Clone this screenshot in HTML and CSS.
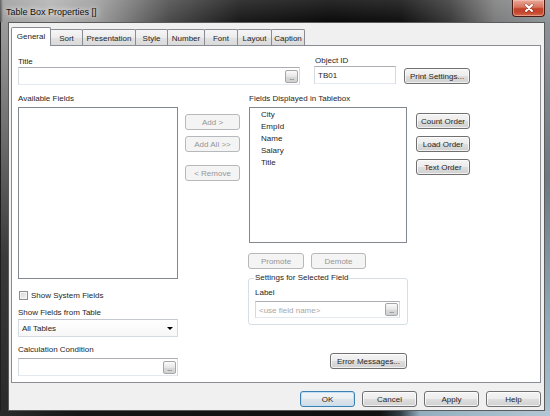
FILE: index.html
```html
<!DOCTYPE html>
<html>
<head>
<meta charset="utf-8">
<title>Table Box Properties</title>
<link rel="stylesheet" href="styles.css">
</head>
<body>
<div class="window">
  <div class="titlebar">
    <span class="title">Table Box Properties []</span>
    <div class="close">
      <svg width="12" height="10" viewBox="0 0 12 10"><path d="M3 2 L9 8 M9 2 L3 8" stroke="#5a1208" stroke-width="3" stroke-linecap="round" opacity="0.5"/><path d="M3 2 L9 8 M9 2 L3 8" stroke="#ffffff" stroke-width="2" stroke-linecap="round"/></svg>
    </div>
  </div>
  <div class="mid">
    <div class="frame-l"></div>
    <div class="client">
      <div class="tabs">
        <div class="tab active t-general">General</div>
        <div class="tab t-sort">Sort</div>
        <div class="tab t-pres">Presentation</div>
        <div class="tab t-style">Style</div>
        <div class="tab t-number">Number</div>
        <div class="tab t-font">Font</div>
        <div class="tab t-layout">Layout</div>
        <div class="tab t-caption">Caption</div>
      </div>
      <div class="panel">
        <div class="toprow">
          <div class="fld title-fld">
            <div class="lbl">Title</div>
            <div class="input"><span></span><span class="ell">...</span></div>
          </div>
          <div class="fld objid-fld">
            <div class="lbl">Object ID</div>
            <div class="input"><span class="val">TB01</span></div>
          </div>
          <button class="btn print">Print Settings...</button>
        </div>
        <div class="cols">
          <div class="col col-left">
            <div class="lbl">Available Fields</div>
            <div class="listbox avail"></div>
            <div class="chk"><span class="box"></span><span>Show System Fields</span></div>
            <div class="lbl lbl-gap">Show Fields from Table</div>
            <div class="combo"><span class="val">All Tables</span><span class="arrow"></span></div>
            <div class="lbl lbl-gap">Calculation Condition</div>
            <div class="input calc"><span></span><span class="ell">...</span></div>
          </div>
          <div class="col col-mid">
            <button class="btn disabled add">Add &gt;</button>
            <button class="btn disabled addall">Add All &gt;&gt;</button>
            <button class="btn disabled remove">&lt; Remove</button>
          </div>
          <div class="col col-right">
            <div class="lbl">Fields Displayed in Tablebox</div>
            <div class="listbox shown">
              <div class="item">City</div>
              <div class="item">EmpId</div>
              <div class="item">Name</div>
              <div class="item">Salary</div>
              <div class="item">Title</div>
            </div>
            <div class="pd-row">
              <button class="btn disabled promote">Promote</button>
              <button class="btn disabled demote">Demote</button>
            </div>
            <fieldset class="group">
              <legend>Settings for Selected Field</legend>
              <div class="lbl">Label</div>
              <div class="input lbl-input"><span class="ph">&lt;use field name&gt;</span><span class="ell">...</span></div>
            </fieldset>
            <button class="btn errmsg">Error Messages...</button>
          </div>
          <div class="col col-far">
            <button class="btn count">Count Order</button>
            <button class="btn load">Load Order</button>
            <button class="btn text">Text Order</button>
          </div>
        </div>
      </div>
      <div class="bottom">
        <button class="btn default">OK</button>
        <button class="btn">Cancel</button>
        <button class="btn">Apply</button>
        <button class="btn">Help</button>
      </div>
    </div>
    <div class="frame-r"></div>
  </div>
  <div class="frame-b"></div>
</div>
</body>
</html>
```
FILE: styles.css
```css
* { box-sizing: border-box; }
html, body { margin: 0; padding: 0; }
body {
  width: 550px;
  height: 416px;
  overflow: hidden;
  font-family: "Liberation Sans", Arial, sans-serif;
  font-size: 8px;
  color: #262626;
  background: #111;
}
.window {
  width: 550px;
  height: 416px;
  display: flex;
  flex-direction: column;
  background:
    linear-gradient(to bottom, rgba(255,255,255,0.12), rgba(255,255,255,0) 22px),
    linear-gradient(to right, #4a4a4a 0px, #9d9d9d 3px, #b3b3b3 50px, #9a9a9a 100px, #4a4a4a 170px, #1a1a1a 240px, #0b0b0b 330px, #111 400px, #3a3a3a 450px, #7d7d7d 495px, #8f969b 550px);
}
.titlebar {
  height: 22px;
  flex: none;
  display: flex;
  align-items: flex-start;
  padding: 0 5px 0 6px;
}
.title {
  font-size: 9px;
  line-height: 24px;
  color: #111;
  text-shadow: 0 0 5px rgba(255,255,255,0.95), 0 0 9px rgba(255,255,255,0.8);
}
.close {
  margin-left: auto;
  width: 33px;
  height: 17px;
  border: 1px solid #4b1a12;
  border-top: none;
  border-radius: 0 0 4px 4px;
  background: linear-gradient(to bottom, #e9a99a 0%, #d7735d 45%, #c1412a 55%, #c5492f 80%, #d86d4f 100%);
  box-shadow: inset 0 0 0 1px rgba(255,210,200,0.45);
  display: flex;
  align-items: center;
  justify-content: center;
}
.mid {
  flex: none;
  height: 389px;
  display: flex;
}
.frame-l {
  width: 8px;
  flex: none;
  border-left: 1px solid #1e1e1e;
  background: linear-gradient(to bottom, #9c9c9c 0%, #6c6c6c 30%, #3a3a3a 60%, #2a2a2a 100%);
}
.frame-r {
  width: 5px;
  flex: none;
  background: linear-gradient(to bottom, #8d9297 0%, #6d7880 40%, #8ea6b6 75%, #a9c0cf 100%);
}
.frame-b {
  flex: 1;
  background: linear-gradient(to right, #2b2b2b 0px, #151515 80px, #101010 380px, #2f3b43 400px, #94aebf 420px, #b2c7d5 550px);
}
.client {
  width: 537px;
  flex: none;
  background: #f0f0f0;
  border: 1px solid #5b5b5b;
  padding: 4px 0 0 1px;
  display: flex;
  flex-direction: column;
}
.tabs {
  display: flex;
  align-items: flex-end;
  height: 18px;
  margin-left: 1px;
}
.tab {
  height: 16px;
  border: 1px solid #898c95;
  border-bottom: none;
  border-radius: 2px 2px 0 0;
  margin-left: -1px;
  background: linear-gradient(to bottom, #f6f6f6 0%, #ececec 50%, #e2e2e2 51%, #dadada 100%);
  display: flex;
  align-items: center;
  justify-content: center;
  padding-top: 1px;
}
.tab.active {
  height: 19px;
  margin-left: 0;
  margin-bottom: -1px;
  background: #fff;
  position: relative;
  z-index: 1;
  padding-bottom: 2px;
}
.t-general { width: 40px; }
.t-sort { width: 33px; }
.t-pres { width: 54px; }
.t-style { width: 33px; }
.t-number { width: 38px; }
.t-font { width: 34px; }
.t-layout { width: 35px; }
.t-caption { width: 34px; }
.panel {
  margin-left: 1px;
  width: 530px;
  height: 338px;
  flex: none;
  border: 1px solid #898c95;
  background: #fff;
  padding: 11px 0 0 6px;
}
.lbl {
  height: 10px;
  line-height: 10px;
  white-space: nowrap;
}
.toprow {
  display: flex;
  align-items: flex-start;
}
.title-fld { width: 282px; }
.objid-fld { width: 82px; margin-left: 14px; }
.objid-fld .lbl { height: 9px; line-height: 8px; padding-left: 1px; }
.input {
  height: 18px;
  border: 1px solid;
  border-color: #abadb3 #d5d9e0 #e3e9ef #d5d9e0;
  background: #fff;
  display: flex;
  align-items: center;
  justify-content: space-between;
  padding: 0 1px 0 3px;
}
.input .val { padding-top: 1px; }
.ell {
  width: 13px;
  height: 13px;
  border: 1px solid #a6a6a6;
  border-radius: 2px;
  background: linear-gradient(to bottom, #fbfbfb, #e6e6e6 50%, #d9d9d9 51%, #d2d2d2);
  font-size: 7px;
  line-height: 14px;
  text-align: center;
  color: #444;
  letter-spacing: -0.5px;
}
.btn {
  height: 16px;
  padding: 0;
  margin: 0;
  font-family: "Liberation Sans", Arial, sans-serif;
  font-size: 8px;
  color: #262626;
  border: 1px solid #707070;
  border-radius: 3px;
  background: linear-gradient(to bottom, #f4f4f4 0%, #ececec 50%, #dedede 51%, #d0d0d0 100%);
  box-shadow: inset 0 0 0 1px rgba(255,255,255,0.7);
  display: flex;
  align-items: center;
  justify-content: center;
  white-space: nowrap;
}
.btn.disabled {
  border-color: #b5b9bc;
  background: #f4f4f4;
  color: #959595;
  box-shadow: none;
}
.btn.default {
  border-color: #3c7fb1;
  background: linear-gradient(to bottom, #f2f5f7 0%, #e9eef2 50%, #dde5eb 51%, #d3dde5 100%);
  box-shadow: inset 0 0 0 1px #bfe0f6;
}
.print { width: 66px; margin: 11px 0 0 8px; }
.cols {
  display: flex;
  align-items: flex-start;
  margin-top: 9px;
}
.col { display: flex; flex-direction: column; }
.col-left { width: 160px; }
.col-mid { width: 55px; margin-left: 7px; }
.col-right { width: 158px; margin-left: 9px; }
.col-far { width: 54px; margin-left: 9px; }
.listbox {
  border: 1px solid #828790;
  background: #fff;
  margin-top: 3px;
}
.avail { height: 172px; }
.shown { height: 136px; padding: 1px 0 0 11px; }
.item { height: 12px; line-height: 12px; }
.chk {
  display: flex;
  align-items: center;
  height: 10px;
  margin-top: 11px;
  padding-left: 1px;
}
.box {
  width: 9px;
  height: 9px;
  border: 1px solid #8e8f8f;
  background: linear-gradient(135deg, #d6d6d6, #f6f6f6);
  box-shadow: inset 0 0 0 1px #f4f4f4;
  margin-right: 3px;
}
.lbl-gap { margin-top: 8px; }
.combo {
  margin-top: 1px;
  height: 18px;
  border: 1px solid;
  border-color: #c4c8ce #d5d9e0 #d5d9e0 #d5d9e0;
  background: linear-gradient(to bottom, #ffffff, #f7f7f7);
  display: flex;
  align-items: center;
  justify-content: space-between;
  padding: 1px 4px 0 3px;
}
.arrow {
  width: 0;
  height: 0;
  border-left: 3px solid transparent;
  border-right: 3px solid transparent;
  border-top: 3px solid #000;
}
.calc { margin-top: 3px; }
.add { margin-top: 20px; }
.addall { margin-top: 6px; }
.remove { margin-top: 13px; }
.pd-row { display: flex; margin-top: 10px; margin-left: -1px; }
.promote { width: 56px; }
.demote { width: 55px; margin-left: 7px; }
.group {
  margin: 4px 0 0 -1px;
  width: 160px;
  min-width: 0;
  border: 1px solid #d5dfe5;
  border-radius: 3px;
  padding: 5px 7px 6px 6px;
}
.group legend {
  padding: 0 1px;
  margin-left: -1px;
  line-height: 10px;
  height: 10px;
}
.lbl-input { margin-top: 3px; height: 17px; }
.ph { color: #a8a8a8; padding-top: 1px; }
.errmsg { width: 77px; margin-top: 28px; align-self: flex-end; }
.count { width: 54px; margin-top: 19px; }
.load { width: 54px; margin-top: 7px; }
.text { width: 54px; margin-top: 7px; }
.bottom {
  display: flex;
  justify-content: flex-end;
  gap: 7px;
  margin-top: 8px;
  padding-right: 3px;
}
.bottom .btn { width: 55px; }
```
